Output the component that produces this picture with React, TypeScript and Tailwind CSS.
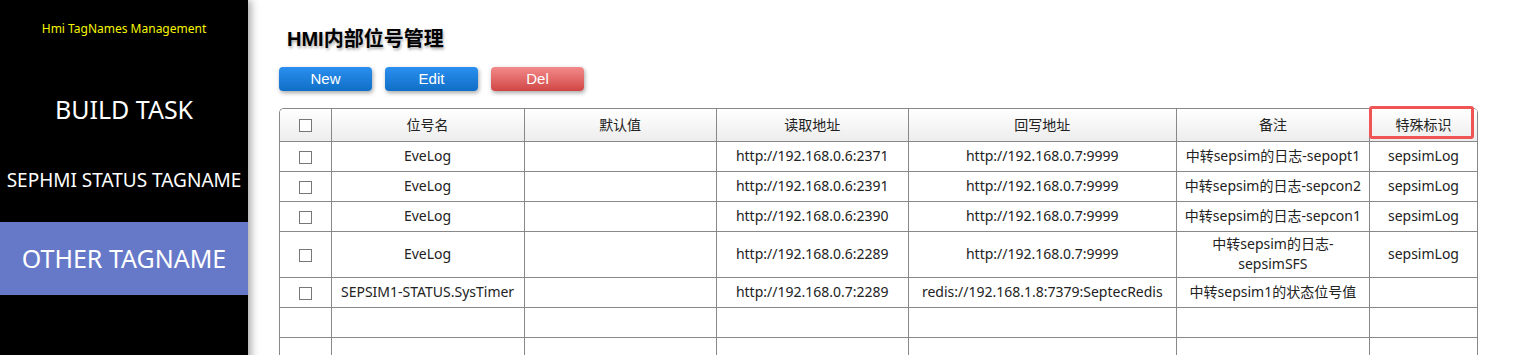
import { useState } from "react";

type Row = {
  name: string;
  def: string;
  read: string;
  write: string;
  note: string;
  flag: string;
  tall?: boolean;
};

const ROWS: Row[] = [
  { name: "EveLog", def: "", read: "http://192.168.0.6:2371", write: "http://192.168.0.7:9999", note: "中转sepsim的日志-sepopt1", flag: "sepsimLog" },
  { name: "EveLog", def: "", read: "http://192.168.0.6:2391", write: "http://192.168.0.7:9999", note: "中转sepsim的日志-sepcon2", flag: "sepsimLog" },
  { name: "EveLog", def: "", read: "http://192.168.0.6:2390", write: "http://192.168.0.7:9999", note: "中转sepsim的日志-sepcon1", flag: "sepsimLog" },
  { name: "EveLog", def: "", read: "http://192.168.0.6:2289", write: "http://192.168.0.7:9999", note: "中转sepsim的日志-sepsimSFS", flag: "sepsimLog", tall: true },
  { name: "SEPSIM1-STATUS.SysTimer", def: "", read: "http://192.168.0.7:2289", write: "redis://192.168.1.8:7379:SeptecRedis", note: "中转sepsim1的状态位号值", flag: "" },
];

const COLS = ["位号名", "默认值", "读取地址", "回写地址", "备注", "特殊标识"];

function Box() {
  return <span className="inline-block h-[13px] w-[13px] border border-[#777] bg-white align-middle" />;
}

const cell = "border-r border-b border-[#888] text-center px-1 pb-[1px]";

export default function App() {
  const [active] = useState("other");

  return (
    <div className="flex min-h-screen bg-white font-['Noto_Sans','Noto_Sans_CJK_SC',sans-serif] text-[14px] text-[#222]">
      {/* sidebar */}
      <aside className="relative z-10 w-[248px] shrink-0 bg-black shadow-[3px_0_8px_rgba(0,0,0,0.35)]">
        <div className="pt-[20px] text-center text-[12px] leading-[18px] text-[#f5f500]">
          Hmi TagNames Management
        </div>
        <nav className="mt-[37px] flex flex-col">
          <div className="flex h-[70px] items-center justify-center text-[25px] text-white">BUILD TASK</div>
          <div className="flex h-[70px] items-center justify-center text-[19px] text-white">SEPHMI STATUS TAGNAME</div>
          <div
            className={
              "mt-[7px] flex h-[73px] items-center justify-center text-[25px] text-white " +
              (active === "other" ? "bg-[#6679c9]" : "")
            }
          >
            OTHER TAGNAME
          </div>
        </nav>
      </aside>

      {/* main */}
      <main className="flex-1 pl-[31px] pt-[25px]">
        <h1 className="pl-[8px] font-['Liberation_Sans','Noto_Sans_CJK_SC',sans-serif] text-[20px] font-bold leading-[28px] text-black [text-shadow:1px_2px_3px_rgba(0,0,0,0.35)]">
          HMI内部位号管理
        </h1>

        <div className="mt-[14px] flex gap-[13px] font-['Liberation_Sans',sans-serif] text-[15px] text-white">
          <button className="h-[24px] w-[93px] rounded-[4px] bg-gradient-to-b from-[#2a8ff0] to-[#0f6fc6] shadow-[1px_2px_4px_rgba(0,0,0,0.35)]">New</button>
          <button className="h-[24px] w-[93px] rounded-[4px] bg-gradient-to-b from-[#2a8ff0] to-[#0f6fc6] shadow-[1px_2px_4px_rgba(0,0,0,0.35)]">Edit</button>
          <button className="h-[24px] w-[93px] rounded-[4px] bg-gradient-to-b from-[#f28a8a] to-[#d04545] shadow-[1px_2px_4px_rgba(0,0,0,0.35)]">Del</button>
        </div>

        <div className="relative mt-[17px] w-[1199px]">
          <div className="overflow-hidden rounded-t-[5px] border-l border-t border-[#888]">
            <table className="w-full table-fixed border-collapse">
              <colgroup>
                <col className="w-[51px]" />
                <col className="w-[193px]" />
                <col className="w-[192px]" />
                <col className="w-[192px]" />
                <col className="w-[268px]" />
                <col className="w-[193px]" />
                <col className="w-[108px]" />
              </colgroup>
              <thead>
                <tr className="h-[32px] bg-gradient-to-b from-white to-[#ededed]">
                  <th className={cell}><Box /></th>
                  {COLS.map((c) => (
                    <th key={c} className={cell + " font-normal"}>{c}</th>
                  ))}
                </tr>
              </thead>
              <tbody>
                {ROWS.map((r, i) => (
                  <tr key={i} className={r.tall ? "h-[46px]" : "h-[30px]"}>
                    <td className={cell}><Box /></td>
                    <td className={cell}>{r.name}</td>
                    <td className={cell}>{r.def}</td>
                    <td className={cell}>{r.read}</td>
                    <td className={cell}>{r.write}</td>
                    <td className={cell + " leading-[20px]"}>{r.note}</td>
                    <td className={cell}>{r.flag}</td>
                  </tr>
                ))}
                {[0, 1, 2].map((i) => (
                  <tr key={"e" + i} className="h-[30px]">
                    {[0, 1, 2, 3, 4, 5, 6].map((j) => (
                      <td key={j} className={cell}></td>
                    ))}
                  </tr>
                ))}
              </tbody>
            </table>
          </div>
          {/* highlight around last header */}
          <div className="pointer-events-none absolute left-[1090px] top-[-2px] h-[33px] w-[105px] rounded-[3px] border-[3px] border-[#f05555]" />
        </div>
      </main>
    </div>
  );
}
